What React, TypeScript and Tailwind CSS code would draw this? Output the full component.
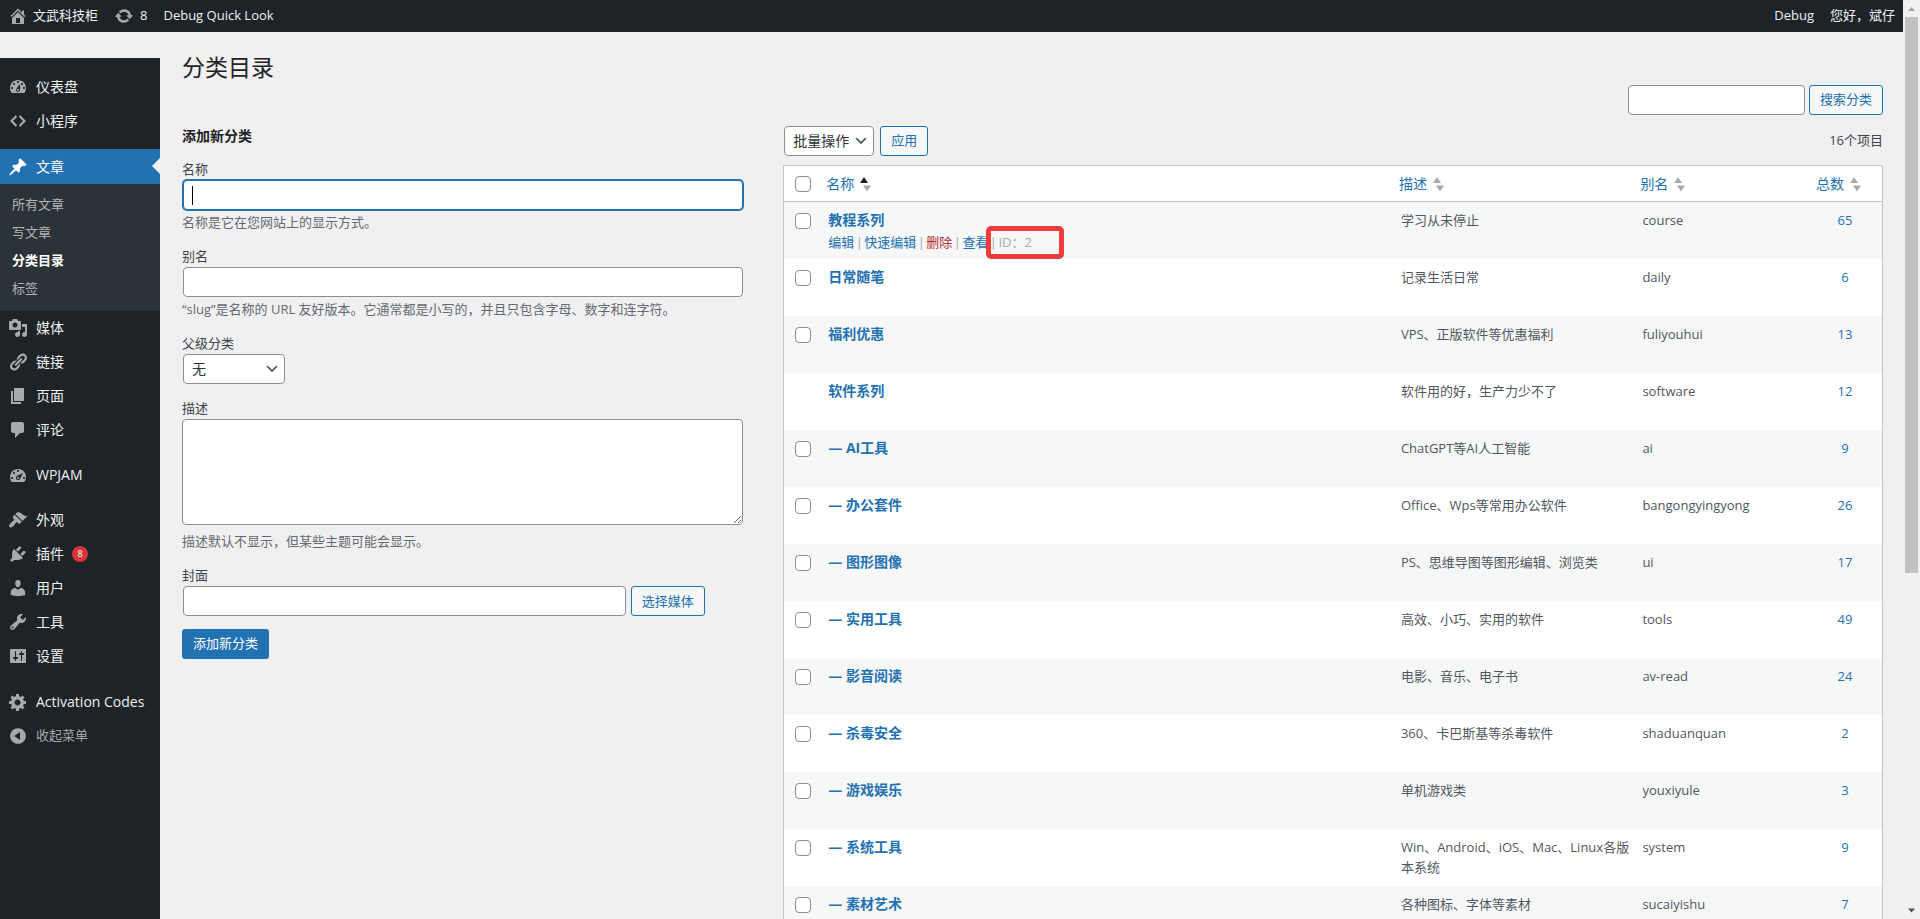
import type { ReactNode } from "react"
import { clsx } from "clsx"

const ICONS = {
  home: "M16 8.5l1.53 1.53-1.06 1.06L10 4.6l-6.47 6.49-1.06-1.06L10 2.5l4 4v-2h2v4zm-6-2.46l6 5.99V18H4v-5.97zM12 17v-5H8v5h4z",
  update:
    "M10.2 3.28c3.53 0 6.43 2.61 6.92 6h2.08l-3.5 4-3.5-4h2.32c-.45-1.97-2.21-3.45-4.32-3.45-1.45 0-2.73.71-3.54 1.78L4.95 5.66C6.23 4.2 8.11 3.28 10.2 3.28zm-.4 13.44c-3.52 0-6.43-2.61-6.92-6H.8l3.5-4c1.17 1.33 2.33 2.67 3.5 4H5.48c.45 1.97 2.21 3.45 4.32 3.45 1.45 0 2.73-.71 3.54-1.78l1.71 1.95c-1.28 1.46-3.15 2.38-5.25 2.38z",
  dashboard:
    "M3.76 16h12.48c1.1-1.37 1.76-3.11 1.76-5 0-4.42-3.58-8-8-8s-8 3.58-8 8c0 1.89.66 3.63 1.76 5zM10 4c.55 0 1 .45 1 1s-.45 1-1 1-1-.45-1-1 .45-1 1-1zM6 6c.55 0 1 .45 1 1s-.45 1-1 1-1-.45-1-1 .45-1 1-1zm8 0c.55 0 1 .45 1 1s-.45 1-1 1-1-.45-1-1 .45-1 1-1zm-5.37 5.55L12 7v6c0 1.1-.9 2-2 2s-2-.9-2-2c0-.57.24-1.08.63-1.45zM4 10c.55 0 1 .45 1 1s-.45 1-1 1-1-.45-1-1 .45-1 1-1zm12 0c.55 0 1 .45 1 1s-.45 1-1 1-1-.45-1-1 .45-1 1-1zm-5 3c0-.55-.45-1-1-1s-1 .45-1 1 .45 1 1 1 1-.45 1-1z",
  code: "M9 6l-4 4 4 4-1 2-6-6 6-6zm2 8l4-4-4-4 1-2 6 6-6 6z",
  post: "M10.44 3.02l1.82-1.82 6.36 6.35-1.83 1.82c-1.05-.68-2.48-.57-3.41.36l-.75.75c-.92.93-1.04 2.35-.35 3.41l-1.83 1.82-2.41-2.41-2.8 2.79c-.42.42-3.38 2.71-3.8 2.29s1.86-3.39 2.28-3.81l2.79-2.79L4.1 9.36l1.83-1.82c1.05.69 2.48.57 3.4-.36l.75-.75c.93-.92 1.05-2.35.36-3.41z",
  media:
    "M13 11V4c0-.55-.45-1-1-1h-1.67L9 1H5L3.67 3H2c-.55 0-1 .45-1 1v7c0 .55.45 1 1 1h10c.55 0 1-.45 1-1zM7 4.5c1.38 0 2.5 1.12 2.5 2.5S8.38 9.5 7 9.5 4.5 8.38 4.5 7 5.62 4.5 7 4.5zM14 6h5v10.5c0 1.38-1.12 2.5-2.5 2.5S14 17.88 14 16.5s1.12-2.5 2.5-2.5c.17 0 .34.02.5.05V9h-3V6zm-4 8.05V13h2v3.5c0 1.38-1.12 2.5-2.5 2.5S7 17.88 7 16.5 8.12 14 9.5 14c.17 0 .34.02.5.05z",
  links:
    "M17.74 2.76c1.68 1.69 1.68 4.41 0 6.1l-1.53 1.52c-1.12 1.12-2.7 1.47-4.14 1.09l2.62-2.61.76-.77.76-.76c.84-.84.84-2.2 0-3.04-.84-.85-2.2-.85-3.04 0l-.77.76-3.38 3.38c-.37-1.44-.02-3.02 1.1-4.14l1.52-1.53c1.69-1.68 4.42-1.68 6.1 0zM8.59 13.43l5.34-5.34c.42-.42.42-1.1 0-1.52-.44-.43-1.13-.39-1.53 0l-5.33 5.34c-.42.42-.42 1.1 0 1.52.44.43 1.13.39 1.52 0zm-.76 2.29l4.14-4.15c.38 1.44.03 3.02-1.09 4.14l-1.52 1.53c-1.69 1.68-4.41 1.68-6.1 0-1.68-1.68-1.68-4.42 0-6.1l1.53-1.52c1.12-1.12 2.7-1.47 4.14-1.1l-4.14 4.15c-.85.84-.85 2.2 0 3.05.84.84 2.2.84 3.04 0z",
  page: "M6 15V2h10v13H6zm-1 1h8v2H3V5h2v11z",
  comments:
    "M5 2h9c1.1 0 2 .9 2 2v7c0 1.1-.9 2-2 2h-2l-5 5v-5H5c-1.1 0-2-.9-2-2V4c0-1.1.9-2 2-2z",
  performance:
    "M3.76 17.01h12.48C17.34 15.63 18 13.9 18 12c0-4.41-3.58-8-8-8s-8 3.59-8 8c0 1.9.66 3.63 1.76 5.01zM9 6c0-.55.45-1 1-1s1 .45 1 1c0 .56-.45 1-1 1s-1-.44-1-1zM5 8c0-.55.45-1 1-1s1 .45 1 1c0 .56-.45 1-1 1s-1-.44-1-1zm3.52 3.4c.84-.83 6.51-3.5 6.51-3.5s-2.66 5.68-3.49 6.51c-.84.84-2.18.84-3.02 0-.83-.83-.83-2.18 0-3.01zM3 13c0-.55.45-1 1-1s1 .45 1 1c0 .56-.45 1-1 1s-1-.44-1-1zm6 0c0 .56.45 1 1 1s1-.44 1-1c0-.55-.45-1-1-1s-1 .45-1 1zm6 0c0-.55.45-1 1-1s1 .45 1 1c0 .56-.45 1-1 1s-1-.44-1-1z",
  appearance:
    "M14.48 11.06L7.41 3.99l1.5-1.5c.5-.56 2.3-.47 3.51.32 1.21.8 1.43 1.28 2.91 2.1 1.18.64 2.45 1.26 4.45.85zm-.71.71L6.7 4.7 4.93 6.47c-.39.39-.39 1.02 0 1.41l1.06 1.06c.39.39.39 1.03 0 1.42-.6.6-1.43 1.11-2.21 1.69-.35.26-.7.53-1.01.84C1.43 14.23.4 16.08 1.4 17.07c.99 1 2.84-.03 4.18-1.36.31-.31.58-.66.85-1.02.57-.78 1.08-1.61 1.69-2.21.39-.39 1.02-.39 1.41 0l1.06 1.06c.39.39 1.02.39 1.41 0z",
  plugins:
    "M13.11 4.36L9.87 7.6 8 5.73l3.24-3.24c.35-.34 1.05-.2 1.56.32.52.51.66 1.21.31 1.55zm-8 1.77l.91-1.12 9.01 9.01-1.19.84c-.71.71-2.63 1.16-3.82 1.16H6.14L4.9 17.26c-.59.59-1.54.59-2.12 0-.59-.58-.59-1.53 0-2.12l1.24-1.24v-3.88c0-1.13.4-3.19 1.09-3.89zm7.26 3.97l3.24-3.24c.34-.35 1.04-.21 1.55.31.52.51.66 1.21.31 1.55l-3.24 3.25z",
  users:
    "M10 9.25c-2.27 0-2.73-3.44-2.73-3.44C7 4.02 7.82 2 9.97 2c2.16 0 2.98 2.02 2.71 3.81 0 0-.41 3.44-2.68 3.44zm0 2.57L12.72 10c2.39 0 4.52 2.33 4.52 4.53v2.49s-3.65 1.13-7.24 1.13c-3.65 0-7.24-1.13-7.24-1.13v-2.49c0-2.25 1.94-4.48 4.47-4.48z",
  tools:
    "M16.68 9.77c-1.34 1.34-3.3 1.67-4.95.99l-5.41 6.52c-.99.99-2.59.99-3.58 0s-.99-2.59 0-3.57l6.52-5.42c-.68-1.65-.35-3.61.99-4.95 1.28-1.28 3.12-1.62 4.72-1.06l-2.89 2.89 2.82 2.82 2.86-2.87c.53 1.58.18 3.39-1.08 4.65zM3.81 16.21c.4.39 1.04.39 1.43 0 .4-.4.4-1.04 0-1.43-.39-.4-1.03-.4-1.43 0-.39.39-.39 1.03 0 1.43z",
  settings:
    "M18 16V4c0-.55-.45-1-1-1H3c-.55 0-1 .45-1 1v12c0 .55.45 1 1 1h14c.55 0 1-.45 1-1zM8 11h1c.55 0 1 .45 1 1s-.45 1-1 1H8v1.5c0 .28-.22.5-.5.5s-.5-.22-.5-.5V13H6c-.55 0-1-.45-1-1s.45-1 1-1h1V5.5c0-.28.22-.5.5-.5s.5.22.5.5V11zm5-2h-1c-.55 0-1-.45-1-1s.45-1 1-1h1V5.5c0-.28.22-.5.5-.5s.5.22.5.5V7h1c.55 0 1 .45 1 1s-.45 1-1 1h-1v5.5c0 .28-.22.5-.5.5s-.5-.22-.5-.5V9z",
  generic:
    "M18 12h-2.18c-.17.7-.44 1.35-.81 1.93l1.54 1.54-2.1 2.1-1.54-1.54c-.58.36-1.23.63-1.91.79V19H8v-2.18c-.68-.16-1.33-.43-1.91-.79l-1.54 1.54-2.12-2.12 1.54-1.54c-.36-.58-.63-1.23-.79-1.91H1V9.03h2.17c.16-.7.44-1.35.8-1.94L2.43 5.55l2.1-2.1 1.54 1.54c.58-.37 1.24-.64 1.93-.81V2h3v2.18c.68.16 1.33.43 1.91.79l1.54-1.54 2.12 2.12-1.54 1.54c.36.59.64 1.24.8 1.94H18V12zm-8.5 1.5c1.66 0 3-1.34 3-3s-1.34-3-3-3-3 1.34-3 3 1.34 3 3 3z",
  collapse:
    "M10 2.16c4.33 0 7.84 3.51 7.84 7.84s-3.51 7.84-7.84 7.84S2.16 14.33 2.16 10 5.71 2.16 10 2.16zm2 11.72V6.12L6.18 9.97z",
}

type IconName = keyof typeof ICONS

function Icon({ name, className }: { name: IconName; className?: string }) {
  return (
    <svg
      viewBox="0 0 20 20"
      className={clsx("size-5 shrink-0", className)}
      fill="currentColor"
      fillRule={name === "links" ? "nonzero" : "evenodd"}
      aria-hidden="true"
    >
      <path d={ICONS[name]} />
    </svg>
  )
}

type MenuItem = { label: string; icon: IconName; badge?: number }

const MENU_TOP: MenuItem[] = [
  { label: "仪表盘", icon: "dashboard" },
  { label: "小程序", icon: "code" },
]

const SUBMENU = ["所有文章", "写文章", "分类目录", "标签"]

const MENU_CONTENT: MenuItem[] = [
  { label: "媒体", icon: "media" },
  { label: "链接", icon: "links" },
  { label: "页面", icon: "page" },
  { label: "评论", icon: "comments" },
]

const MENU_ADMIN: MenuItem[] = [
  { label: "外观", icon: "appearance" },
  { label: "插件", icon: "plugins", badge: 8 },
  { label: "用户", icon: "users" },
  { label: "工具", icon: "tools" },
  { label: "设置", icon: "settings" },
]

type Term = { name: string; description: string; slug: string; count: number; fixed?: boolean }

const TERMS: Term[] = [
  { name: "教程系列", description: "学习从未停止", slug: "course", count: 65 },
  { name: "日常随笔", description: "记录生活日常", slug: "daily", count: 6 },
  { name: "福利优惠", description: "VPS、正版软件等优惠福利", slug: "fuliyouhui", count: 13 },
  { name: "软件系列", description: "软件用的好，生产力少不了", slug: "software", count: 12, fixed: true },
  { name: "— AI工具", description: "ChatGPT等AI人工智能", slug: "ai", count: 9 },
  { name: "— 办公套件", description: "Office、Wps等常用办公软件", slug: "bangongyingyong", count: 26 },
  { name: "— 图形图像", description: "PS、思维导图等图形编辑、浏览类", slug: "ui", count: 17 },
  { name: "— 实用工具", description: "高效、小巧、实用的软件", slug: "tools", count: 49 },
  { name: "— 影音阅读", description: "电影、音乐、电子书", slug: "av-read", count: 24 },
  { name: "— 杀毒安全", description: "360、卡巴斯基等杀毒软件", slug: "shaduanquan", count: 2 },
  { name: "— 游戏娱乐", description: "单机游戏类", slug: "youxiyule", count: 3 },
  { name: "— 系统工具", description: "Win、Android、iOS、Mac、Linux各版本系统", slug: "system", count: 9 },
  { name: "— 素材艺术", description: "各种图标、字体等素材", slug: "sucaiyishu", count: 7 },
]

const inputClass = "h-[30px] rounded-sm border border-[#8c8f94] bg-white px-2 text-sm outline-none"
const buttonClass =
  "h-[30px] shrink-0 rounded-[3px] border border-[#2271b1] bg-[#f6f7f7] px-[10px] text-[13px] text-[#2271b1]"

function AdminBar() {
  return (
    <header className="flex h-8 shrink-0 items-center justify-between bg-[#1d2327] px-2 text-[13px] text-[#f0f0f1]">
      <nav className="flex items-center gap-4" aria-label="工具栏">
        <a href="#home" className="flex items-center gap-[5px]">
          <Icon name="home" className="text-[#a7aaad]" />
          文武科技柜
        </a>
        <a href="#updates" className="flex items-center gap-[6px]">
          <Icon name="update" className="text-[#a7aaad]" />8
        </a>
        <a href="#quick-look">Debug Quick Look</a>
      </nav>
      <nav className="flex items-center gap-4" aria-label="账户">
        <a href="#debug">Debug</a>
        <a href="#profile">您好，斌仔</a>
      </nav>
    </header>
  )
}

function MenuLink({ item }: { item: MenuItem }) {
  return (
    <a href="#menu" className="flex h-[34px] items-center gap-2 px-2 text-sm text-[#f0f0f1]">
      <Icon name={item.icon} className="text-[#a7aaad]" />
      {item.label}
      {item.badge && (
        <span className="flex size-4 items-center justify-center rounded-full bg-[#d63638] text-[9px] text-white">
          {item.badge}
        </span>
      )}
    </a>
  )
}

function SideMenu() {
  return (
    <nav
      aria-label="主菜单"
      className="mt-[26px] flex w-40 shrink-0 flex-col gap-[11px] bg-[#1d2327] pt-3"
    >
      <div>
        {MENU_TOP.map((item) => (
          <MenuLink key={item.label} item={item} />
        ))}
      </div>
      <div>
        <a
          href="#posts"
          className="relative flex h-[35px] items-center gap-2 bg-[#2271b1] px-2 text-sm text-white"
        >
          <Icon name="post" />
          文章
          <span className="absolute top-[9px] right-0 border-y-8 border-r-8 border-y-transparent border-r-[#f0f0f1]" />
        </a>
        <div className="bg-[#2c3338] pt-[7px] pb-2">
          {SUBMENU.map((label) => (
            <a
              key={label}
              href="#submenu"
              aria-current={label === "分类目录" ? "page" : undefined}
              className={clsx(
                "flex h-7 items-center px-3 text-[13px]",
                label === "分类目录" ? "font-bold text-white" : "text-[#b4b6b8]"
              )}
            >
              {label}
            </a>
          ))}
        </div>
        {MENU_CONTENT.map((item) => (
          <MenuLink key={item.label} item={item} />
        ))}
      </div>
      <MenuLink item={{ label: "WPJAM", icon: "performance" }} />
      <div className="pb-px">
        {MENU_ADMIN.map((item) => (
          <MenuLink key={item.label} item={item} />
        ))}
      </div>
      <div>
        <MenuLink item={{ label: "Activation Codes", icon: "generic" }} />
        <button
          type="button"
          className="flex h-[34px] items-center gap-2 px-2 text-[13px] text-[#a7aaad]"
        >
          <Icon name="collapse" />
          收起菜单
        </button>
      </div>
    </nav>
  )
}

type FieldProps = { id: string; label: string; help?: string; children: ReactNode }

function Field({ id, label, help, children }: FieldProps) {
  return (
    <div className="flex flex-col items-start text-[13px] leading-5">
      <label htmlFor={id} className="pb-px">
        {label}
      </label>
      {children}
      {help && <p className="mt-0.5 text-[#646970]">{help}</p>}
    </div>
  )
}

function Chevron() {
  return (
    <svg
      viewBox="0 0 20 20"
      className="pointer-events-none absolute top-[7px] right-[5px] size-4"
      fill="#50575e"
      aria-hidden="true"
    >
      <path d="M5 6l5 5 5-5 2 1-7 7-7-7 2-1z" />
    </svg>
  )
}

function AddTermForm() {
  return (
    <form className="flex w-[33%] shrink-0 flex-col" onSubmit={(e) => e.preventDefault()}>
      <h2 className="mb-[13px] text-sm leading-5 font-bold text-[#1d2327]">添加新分类</h2>
      <div className="flex flex-col gap-3.5">
        <Field id="term-name" label="名称" help="名称是它在您网站上的显示方式。">
          <div className="relative w-full pl-px">
            <input
              id="term-name"
              type="text"
              className="block h-[30px] w-full rounded-sm border border-[#2271b1] bg-white px-2 text-sm caret-transparent ring-1 ring-[#2271b1] outline-none"
            />
            <span className="absolute top-[6px] left-[10px] h-[19px] w-px bg-black" />
          </div>
        </Field>
        <Field
          id="term-slug"
          label="别名"
          help="“slug”是名称的 URL 友好版本。它通常都是小写的，并且只包含字母、数字和连字符。"
        >
          <div className="w-full pl-px">
            <input id="term-slug" type="text" className={clsx(inputClass, "block w-full")} />
          </div>
        </Field>
        <Field id="term-parent" label="父级分类">
          <div className="relative ml-px">
            <select
              id="term-parent"
              className={clsx(inputClass, "block w-[102px] appearance-none text-[#2c3338]")}
            >
              <option>无</option>
            </select>
            <Chevron />
          </div>
        </Field>
        <Field id="term-description" label="描述">
          <textarea
            id="term-description"
            className="block h-[106px] w-full rounded-sm border border-[#8c8f94] bg-white px-2 text-sm outline-none"
          />
          <p className="mt-1.5 text-[#646970]">描述默认不显示，但某些主题可能会显示。</p>
        </Field>
        <Field id="term-cover" label="封面">
          <div className="flex w-full gap-[5px] pl-px">
            <input id="term-cover" type="text" className={clsx(inputClass, "w-[79%]")} />
            <button type="button" className={buttonClass}>
              选择媒体
            </button>
          </div>
        </Field>
      </div>
      <button
        type="submit"
        className="mt-[13px] h-[30px] self-start rounded-[3px] bg-[#2271b1] px-[11px] text-[13px] text-white"
      >
        添加新分类
      </button>
    </form>
  )
}

function SortLabel({ label, sorted }: { label: string; sorted?: boolean }) {
  return (
    <a href="#sort" className="flex items-center gap-[6px] px-2 text-sm font-normal text-[#2271b1]">
      {label}
      <svg viewBox="0 0 12 16" className="h-4 w-3 shrink-0" aria-hidden="true">
        <path d="M0 7L4 1L8 7z" fill={sorted ? "#1d2327" : "#a7aaad"} />
        <path d="M3 9.500h8L7 15.500z" fill="#a7aaad" />
      </svg>
    </a>
  )
}

function Separator() {
  return <span className="w-[10px] text-center">|</span>
}

function RowActions() {
  return (
    <div className="mt-0.5 flex text-[13px] leading-5 whitespace-nowrap text-[#a7aaad]">
      <a href="#edit" className="text-[#2271b1]">
        编辑
      </a>
      <Separator />
      <a href="#quick-edit" className="text-[#2271b1]">
        快速编辑
      </a>
      <Separator />
      <a href="#delete" className="text-[#b32d2e]">
        删除
      </a>
      <Separator />
      <a href="#view" className="text-[#2271b1]">
        查看
      </a>
      <Separator />
      <span className="relative">
        ID：2
        <span className="absolute -top-[6px] -left-3 h-[33px] w-[78px] rounded-[5px] border-5 border-[#ee3b3b]" />
      </span>
    </div>
  )
}

function Checkbox({ label }: { label: string }) {
  return (
    <input
      type="checkbox"
      aria-label={label}
      className="block size-4 appearance-none rounded-sm border border-[#8c8f94] bg-white"
    />
  )
}

function TermTable() {
  return (
    <table className="mt-[9px] w-full table-fixed border-separate border-spacing-0 border border-[#c3c4c7] bg-white">
      <thead>
        <tr className="h-9 text-left">
          <th className="w-[34px] border-b border-[#c3c4c7] pl-[11px]">
            <Checkbox label="全选" />
          </th>
          <th className="border-b border-[#c3c4c7]">
            <SortLabel label="名称" sorted />
          </th>
          <th className="w-[22%] border-b border-[#c3c4c7]">
            <SortLabel label="描述" />
          </th>
          <th className="w-[16%] border-b border-[#c3c4c7]">
            <SortLabel label="别名" />
          </th>
          <th className="w-[74px] border-b border-[#c3c4c7]">
            <SortLabel label="总数" />
          </th>
        </tr>
      </thead>
      <tbody className="text-[13px] leading-5 text-[#50575e]">
        {TERMS.map((term, i) => (
          <tr key={term.slug} className="h-[57px] align-top odd:bg-[#f6f7f7]">
            <td className="pt-[11px] pl-[11px]">
              {!term.fixed && <Checkbox label={`选择${term.name}`} />}
            </td>
            <td className="px-[10px] pt-2">
              <a href="#term" className="block text-sm leading-5 font-bold text-[#2271b1]">
                {term.name}
              </a>
              {i === 0 && <RowActions />}
            </td>
            <td className="pt-2 pl-[10px]">{term.description}</td>
            <td className="px-[10px] pt-2">{term.slug}</td>
            <td className="pt-2 text-center">
              <a href="#count" className="text-[#2271b1]">
                {term.count}
              </a>
            </td>
          </tr>
        ))}
      </tbody>
    </table>
  )
}

function Scrollbar() {
  return (
    <div className="flex w-[17px] shrink-0 flex-col items-center bg-[#f1f1f1]" aria-hidden="true">
      <svg viewBox="0 0 17 17" className="size-[17px] shrink-0">
        <path d="M5 11L8.500 7L12 11z" fill="#a3a3a3" />
      </svg>
      <div className="h-[60.5%] w-[13px] bg-[#c1c1c1]" />
      <svg viewBox="0 0 17 17" className="mt-auto size-[17px] shrink-0">
        <path d="M5 6.500L8.500 10.500L12 6.500z" fill="#505050" />
      </svg>
    </div>
  )
}

export default function App() {
  return (
    <div className="flex h-screen overflow-hidden bg-[#f0f0f1] font-['Open_Sans','Noto_Sans_CJK_SC',sans-serif] text-[13px] text-[#3c434a]">
      <div className="flex min-w-0 flex-1 flex-col">
        <AdminBar />
        <div className="flex min-h-0 flex-1">
          <SideMenu />
          <main className="min-w-0 flex-1 pt-5 pr-5 pl-[22px]">
            <h1 className="text-[23px] leading-[30px] text-[#1d2327]">分类目录</h1>
            <form
              className="mt-[3px] flex justify-end gap-1"
              role="search"
              onSubmit={(e) => e.preventDefault()}
            >
              <input
                type="search"
                aria-label="搜索分类"
                className={clsx(inputClass, "w-[177px]")}
              />
              <button type="submit" className={buttonClass}>
                搜索分类
              </button>
            </form>
            <div className="mt-[11px] flex gap-10">
              <AddTermForm />
              <section className="min-w-0 flex-1">
                <div className="flex items-center gap-[6px] pl-px">
                  <div className="relative">
                    <select
                      aria-label="批量操作"
                      className={clsx(inputClass, "block w-[90px] appearance-none text-[#2c3338]")}
                    >
                      <option>批量操作</option>
                    </select>
                    <Chevron />
                  </div>
                  <button type="button" className={buttonClass}>
                    应用
                  </button>
                  <span className="ml-auto">16个项目</span>
                </div>
                <TermTable />
              </section>
            </div>
          </main>
        </div>
      </div>
      <Scrollbar />
    </div>
  )
}
